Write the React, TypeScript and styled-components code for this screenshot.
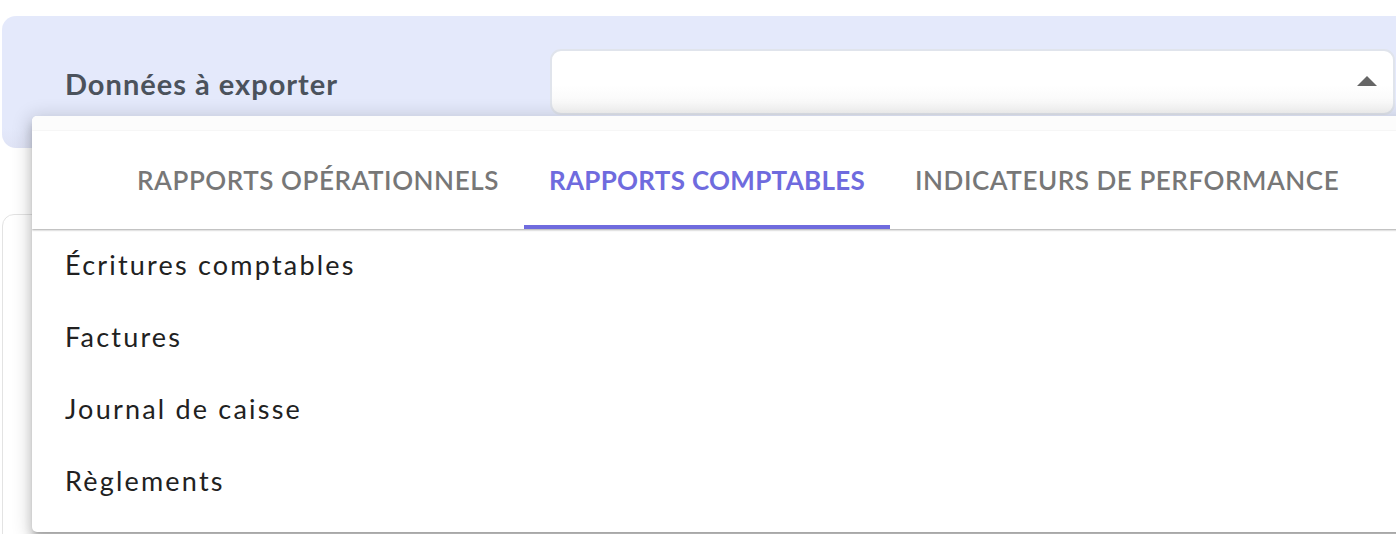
import React, { useState } from 'react';
import styled, { createGlobalStyle } from 'styled-components';

const GlobalStyle = createGlobalStyle`
  html, body {
    margin: 0;
    padding: 0;
    background: #ffffff;
    overflow: hidden;
    font-family: 'Lato', 'Liberation Sans', sans-serif;
  }
`;

const tabs = ['Rapports opérationnels', 'Rapports comptables', 'Indicateurs de performance'];
const items = ['Écritures comptables', 'Factures', 'Journal de caisse', 'Règlements'];

const App: React.FC = () => {
    const [active, setActive] = useState(1);
    return (
        <>
            <GlobalStyle />
            <Page>
                <ExportPanel>
                    <Label>Données à exporter</Label>
                    <SelectBox>
                        <svg width="20" height="10" viewBox="0 0 20 10">
                            <polygon points="0,10 10,0 20,10" fill="#666666" />
                        </svg>
                    </SelectBox>
                </ExportPanel>
                <BehindCard />
                <Dropdown>
                    <TopBand />
                    <TabBar>
                        {tabs.map((t, i) => (
                            <Tab key={t} $active={i === active} onClick={() => setActive(i)}>
                                {t}
                            </Tab>
                        ))}
                    </TabBar>
                    <MenuList>
                        {items.map((it) => (
                            <MenuItem key={it}>{it}</MenuItem>
                        ))}
                    </MenuList>
                </Dropdown>
            </Page>
        </>
    );
};

const Page = styled.div`
  position: relative;
  width: 1440px;
  height: 534px;
  padding: 16px 0 0 2px;
  box-sizing: border-box;
  overflow: hidden;
`;

const ExportPanel = styled.div`
  height: 132px;
  border-radius: 14px;
  background: linear-gradient(180deg, #e4e9fb 0%, #e4e9fb 85%, #dfe3f5 100%);
  display: flex;
  align-items: center;
  padding-left: 63px;
  box-sizing: border-box;
`;

const Label = styled.div`
  width: 485px;
  font-size: 29px;
  font-weight: 700;
  letter-spacing: 1px;
  color: #4b525c;
  padding-top: 2px;
`;

const SelectBox = styled.div`
  width: 845px;
  height: 66px;
  box-sizing: border-box;
  border: 2px solid #e0e4ec;
  border-radius: 11px;
  background: linear-gradient(180deg, #ffffff 0%, #ffffff 55%, #f6f6f6 100%);
  display: flex;
  align-items: center;
  justify-content: flex-end;
  padding-right: 16px;
  padding-bottom: 2px;
`;

const BehindCard = styled.div`
  margin-top: 66px;
  height: 330px;
  border: 1px solid #e3e3e3;
  border-radius: 12px;
  background: #ffffff;
`;

const Dropdown = styled.div`
  position: absolute;
  top: 116px;
  left: 32px;
  width: 1410px;
  height: 416px;
  background: #ffffff;
  border-radius: 5px;
  overflow: hidden;
  box-shadow: 0px 5px 5px -3px rgba(0, 0, 0, 0.2), 0px 8px 10px 1px rgba(0, 0, 0, 0.14),
    0px 3px 18px 4px rgba(0, 0, 0, 0.14);
  display: flex;
  flex-direction: column;
`;

const TopBand = styled.div`
  height: 15px;
  background: #fcfcfc;
`;

const TabBar = styled.div`
  height: 98px;
  display: flex;
  padding-left: 80px;
  background: #ffffff;
  box-shadow: 0 1px 2px rgba(0, 0, 0, 0.35);
  position: relative;
  z-index: 1;
`;

const Tab = styled.div<{ $active: boolean }>`
  padding: 0 25px;
  display: flex;
  align-items: center;
  box-sizing: border-box;
  text-transform: uppercase;
  font-size: 26px;
  font-weight: ${(p) => (p.$active ? 700 : 600)};
  letter-spacing: ${(p) => (p.$active ? '0.3px' : '0.55px')};
  color: ${(p) => (p.$active ? '#6f6bde' : '#777777')};
  border-bottom: 4px solid ${(p) => (p.$active ? '#6f6bde' : 'transparent')};
  border-top: 4px solid transparent;
  cursor: pointer;
`;

const MenuList = styled.div`
  display: flex;
  flex-direction: column;
  margin-top: -1px;
`;

const MenuItem = styled.div`
  height: 72px;
  display: flex;
  align-items: center;
  padding-left: 33px;
  font-size: 27px;
  letter-spacing: 2.2px;
  color: #212121;
`;

export default App;
